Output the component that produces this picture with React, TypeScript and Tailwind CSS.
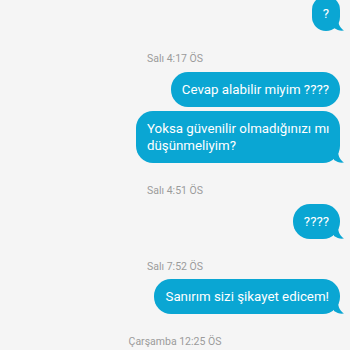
import type { ReactNode } from "react";

const font = { fontFamily: "Roboto, 'Liberation Sans', sans-serif" };

function Tail() {
  return (
    <svg
      className="absolute -right-[4px] bottom-0"
      width="10"
      height="14"
      viewBox="0 0 10 14"
    >
      <path d="M0 0 L4 0 C4 6 5 10 10 13.5 C6 14 3 13 0 11 Z" fill="#0aa6d3" />
    </svg>
  );
}

function Bubble({
  children,
  tail = true,
  className = "",
}: {
  children: ReactNode;
  tail?: boolean;
  className?: string;
}) {
  return (
    <div className={`relative mr-[10px] self-end ${className}`}>
      <div className="whitespace-nowrap rounded-[17px] bg-[#0aa6d3] px-[11px] py-[9px] text-[13.3px] leading-[17px] text-white">
        {children}
      </div>
      {tail && <Tail />}
    </div>
  );
}

function Stamp({ children, className = "" }: { children: ReactNode; className?: string }) {
  return (
    <div className={`self-center text-[10.5px] leading-[14px] text-[#9b9b9b] ${className}`}>
      {children}
    </div>
  );
}

export default function App() {
  return (
    <div
      className="flex h-[350px] w-[350px] flex-col overflow-hidden bg-[#f5f5f5]"
      style={font}
    >
      <Bubble className="-mt-[4px]">?</Bubble>
      <Stamp className="mt-[21px]">Salı 4:17 ÖS</Stamp>
      <Bubble tail={false} className="mt-[6px]">
        Cevap alabilir miyim ????
      </Bubble>
      <Bubble className="mt-[4px] w-[204px]">
        Yoksa güvenilir olmadığınızı mı
        <br />
        düşünmeliyim?
      </Bubble>
      <Stamp className="mt-[21px]">Salı 4:51 ÖS</Stamp>
      <Bubble className="mt-[6px]">????</Bubble>
      <Stamp className="mt-[21px]">Salı 7:52 ÖS</Stamp>
      <Bubble className="mt-[5px]">Sanırım sizi şikayet edicem!</Bubble>
      <Stamp className="mt-[21px]">Çarşamba 12:25 ÖS</Stamp>
    </div>
  );
}
